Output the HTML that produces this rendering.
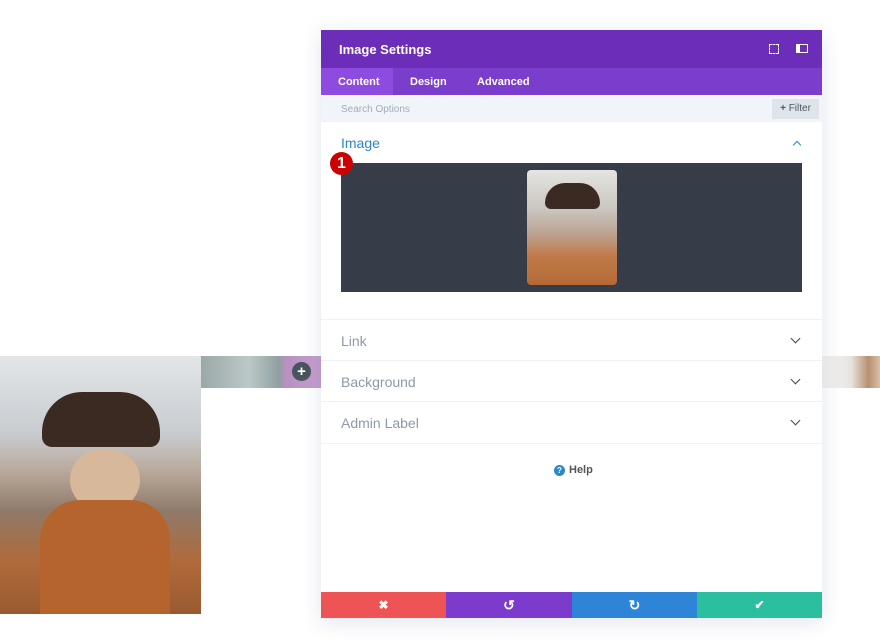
<!DOCTYPE html><html><head><style>
body{margin:0;width:880px;height:641px;background:#fff;position:relative;overflow:hidden;font-family:"Liberation Sans",sans-serif}
.a{position:absolute}
.row{position:absolute;left:321px;width:501px;border-top:1px solid #eef1f5;}
.row span{position:absolute;left:20px;font-size:14px;color:#8e9aa6}
.chev{position:absolute;right:23px;width:6px;height:6px;border-right:1.6px solid #444;border-bottom:1.6px solid #444;transform:rotate(45deg)}
</style></head><body>
<div class="a" style="left:0;top:356px;width:201px;height:258px;background:linear-gradient(180deg,#e2e6e8 0%,#c8ccd0 30%,#b9a89a 45%,#8f7a6a 60%,#b06a3a 80%,#9a5a30 100%)"></div>
<div class="a" style="left:42px;top:392px;width:118px;height:55px;background:#3a2a22;border-radius:40px 40px 10px 10px"></div>
<div class="a" style="left:70px;top:450px;width:70px;height:60px;background:#d8b89a;border-radius:30px"></div>
<div class="a" style="left:40px;top:500px;width:130px;height:114px;background:#b5642e;border-radius:40px 40px 0 0"></div>
<div class="a" style="left:201px;top:356px;width:120px;height:32px;background:linear-gradient(90deg,#9aa8a6,#bcc8c8 40%,#8fa0a0 65%,#b890c0 70%,#c6a0cf)"></div>
<div class="a" style="left:292px;top:362px;width:19px;height:19px;border-radius:50%;background:#4a545e;color:#fff;font-size:15px;line-height:19px;text-align:center;font-weight:bold">+</div>
<div class="a" style="left:822px;top:356px;width:58px;height:32px;background:linear-gradient(90deg,#f4f4f4,#e8e4e0 50%,#b89070 80%,#d8c0a8)"></div>
<div class="a" style="left:321px;top:30px;width:501px;height:588px;background:#fff;box-shadow:0 4px 20px rgba(0,40,100,.12)"></div>
<div class="a" style="left:321px;top:30px;width:501px;height:38px;background:#6c2eb8"></div>
<div class="a" style="left:339px;top:42px;color:#fff;font-size:13px;font-weight:bold">Image Settings</div>
<div class="a" style="left:769px;top:44px;width:8px;height:8px;border:1.5px dashed #fff"></div>
<div class="a" style="left:796px;top:44px;width:7px;height:7px;border:1.5px solid #fff;border-left-width:4px"></div>
<div class="a" style="left:321px;top:68px;width:501px;height:27px;background:#7b3dcc"></div>
<div class="a" style="left:321px;top:68px;width:72px;height:27px;background:#8e4be0"></div>
<div class="a" style="left:338px;top:76px;color:#fff;font-size:11px;font-weight:bold">Content</div>
<div class="a" style="left:410px;top:76px;color:#fff;font-size:11px;font-weight:bold">Design</div>
<div class="a" style="left:477px;top:76px;color:#fff;font-size:11px;font-weight:bold">Advanced</div>
<div class="a" style="left:321px;top:95px;width:501px;height:27px;background:#f1f4f8"></div>
<div class="a" style="left:341px;top:104px;color:#a3adb8;font-size:10px">Search Options</div>
<div class="a" style="left:772px;top:99px;width:47px;height:20px;background:#dfe4ea;color:#4c5866;font-size:10px;line-height:20px;text-align:center"><b>+</b> Filter</div>
<div class="a" style="left:341px;top:135px;color:#2e85c8;font-size:14px">Image</div>
<div class="a" style="left:794px;top:142px;width:5px;height:5px;border-left:1.6px solid #2e85c8;border-top:1.6px solid #2e85c8;transform:rotate(45deg)"></div>
<div class="a" style="left:341px;top:163px;width:461px;height:129px;background:#363d48"></div>
<div class="a" style="left:527px;top:170px;width:90px;height:115px;border-radius:4px;background:linear-gradient(180deg,#e4e4e2 0%,#c9c4be 35%,#bca492 55%,#c07a48 75%,#b56a36 100%)"></div>
<div class="a" style="left:545px;top:183px;width:55px;height:26px;background:#3a2a22;border-radius:20px 20px 6px 6px"></div>
<div class="a" style="left:330px;top:152px;width:23px;height:23px;border-radius:50%;background:#c00;color:#fff;font-size:16px;font-weight:bold;text-align:center;line-height:23px">1</div>
<div class="row" style="top:319px;height:40px"><span style="top:13px">Link</span><i class="chev" style="top:15px"></i></div>
<div class="row" style="top:360px;height:40px"><span style="top:13px">Background</span><i class="chev" style="top:15px"></i></div>
<div class="row" style="top:401px;height:41px"><span style="top:13px">Admin Label</span><i class="chev" style="top:15px"></i></div>
<div class="row" style="top:443px;height:0"></div>
<div class="a" style="left:554px;top:465px;width:11px;height:11px;border-radius:50%;background:#2e85c8;color:#fff;font-size:8px;font-weight:bold;text-align:center;line-height:11px">?</div>
<div class="a" style="left:569px;top:464px;color:#555;font-size:11px;font-weight:bold">Help</div>
<div class="a" style="left:321px;top:592px;width:125px;height:26px;background:#ee5455;color:#fff;text-align:center;line-height:26px;font-size:12px;font-weight:bold">✖</div>
<div class="a" style="left:446px;top:592px;width:126px;height:26px;background:#7c3bcd;color:#fff;text-align:center;line-height:26px;font-size:14px;font-weight:bold">↺</div>
<div class="a" style="left:572px;top:592px;width:125px;height:26px;background:#2e84d6;color:#fff;text-align:center;line-height:26px;font-size:14px;font-weight:bold">↻</div>
<div class="a" style="left:697px;top:592px;width:125px;height:26px;background:#2bbfa0;color:#fff;text-align:center;line-height:26px;font-size:12px;font-weight:bold">✔</div>
</body></html>
